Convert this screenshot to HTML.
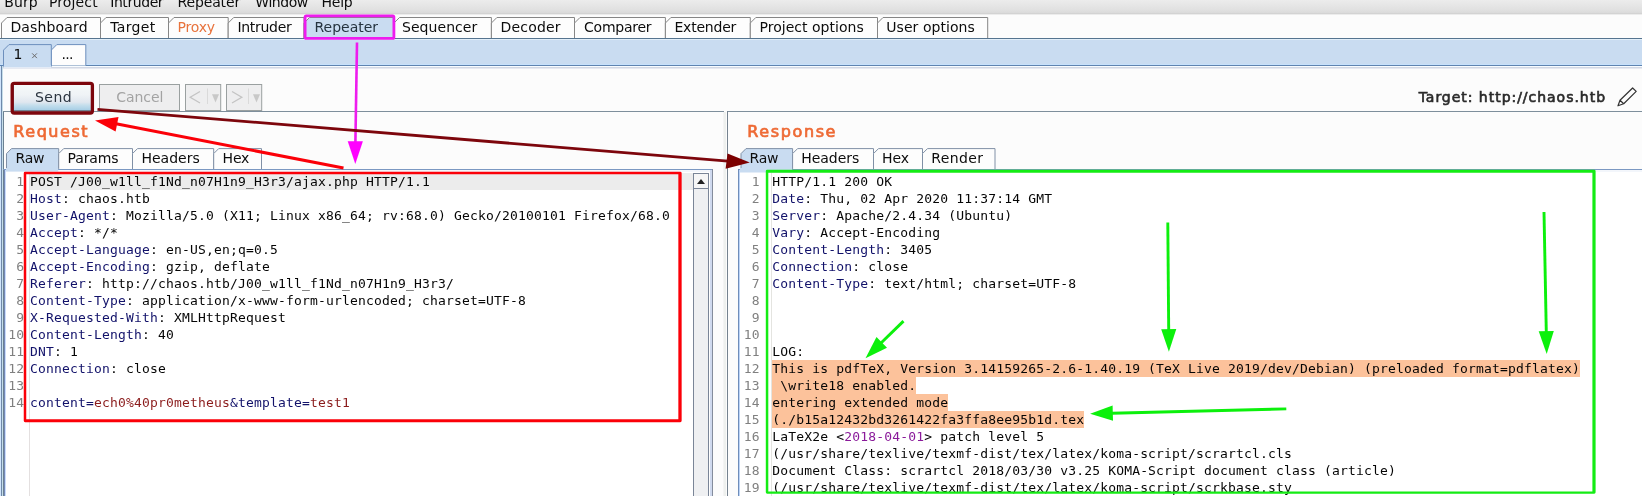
<!DOCTYPE html>
<html><head><meta charset="utf-8"><title>Burp Suite Repeater</title>
<style>
html,body{margin:0;padding:0;background:#fbfbfb;overflow:hidden}
svg{display:block;will-change:transform}
text{font-family:"DejaVu Sans","Liberation Sans",sans-serif;font-size:14px;fill:#1a1a1a;white-space:pre}
.m{font-family:"DejaVu Sans Mono","Liberation Mono",monospace;font-size:13px;letter-spacing:0.172px;fill:#050505}
.ln{font-family:"DejaVu Sans Mono","Liberation Mono",monospace;font-size:13px;letter-spacing:0.172px;fill:#808080;text-anchor:end}
.k{fill:#12126a}
.r{fill:#8b1c1c}
.p{fill:#8a1a9a}
</style></head><body>
<svg width="1642" height="496" viewBox="0 0 1642 496">
<defs>
<linearGradient id="gm" x1="0" y1="0" x2="0" y2="1"><stop offset="0" stop-color="#ececec"/><stop offset="0.8" stop-color="#e0e0e0"/><stop offset="1" stop-color="#dadada"/></linearGradient>
<linearGradient id="gs" x1="0" y1="0" x2="0" y2="1"><stop offset="0" stop-color="#f6fafa"/><stop offset="0.4" stop-color="#eff3f6"/><stop offset="0.68" stop-color="#e0e7ef"/><stop offset="0.8" stop-color="#c4deec"/><stop offset="1" stop-color="#a5cde5"/></linearGradient>
</defs>

<rect x="0" y="0" width="1642" height="496" fill="#fcfcfc"/>
<rect x="0" y="0" width="1642" height="13" fill="url(#gm)"/>
<rect x="0" y="13" width="1642" height="1" fill="#d3d3d3"/>
<rect x="0" y="14" width="1642" height="1" fill="#ececec"/>
<rect x="0" y="38" width="1642" height="27" fill="#c9dcf1"/>
<rect x="0" y="38" width="1642" height="1" fill="#55748f"/>
<rect x="0" y="39" width="1642" height="1" fill="#e2effa"/>
<rect x="0" y="64" width="1642" height="1" fill="#c6e1fc"/>
<rect x="0" y="65" width="1642" height="1" fill="#5f84b0"/>
<rect x="0" y="66" width="1642" height="1" fill="#f8fcff"/>
<rect x="0" y="67" width="1642" height="1" fill="#d2d8e4"/>
<rect x="0" y="68" width="1642" height="1" fill="#e6e9f1"/>
<path d="M1.5 38 L1.5 23.0 L7.0 17.5 L100.5 17.5 L100.5 38" fill="#fdfdfd" stroke="#868686" stroke-width="1"/>
<path d="M100.5 38 L100.5 23.0 L106.0 17.5 L168.5 17.5 L168.5 38" fill="#fdfdfd" stroke="#868686" stroke-width="1"/>
<path d="M168.5 38 L168.5 23.0 L174.0 17.5 L228.2 17.5 L228.2 38" fill="#fdfdfd" stroke="#868686" stroke-width="1"/>
<path d="M228.2 38 L228.2 23.0 L233.7 17.5 L304 17.5 L304 38" fill="#fdfdfd" stroke="#868686" stroke-width="1"/>
<path d="M304 38 L304 23.0 L309.5 17.5 L394 17.5 L394 38" fill="#c9dcf1" stroke="#868686" stroke-width="1"/>
<path d="M394 38 L394 23.0 L399.5 17.5 L491.4 17.5 L491.4 38" fill="#fdfdfd" stroke="#868686" stroke-width="1"/>
<path d="M491.4 38 L491.4 23.0 L496.9 17.5 L574.5 17.5 L574.5 38" fill="#fdfdfd" stroke="#868686" stroke-width="1"/>
<path d="M574.5 38 L574.5 23.0 L580.0 17.5 L665.4 17.5 L665.4 38" fill="#fdfdfd" stroke="#868686" stroke-width="1"/>
<path d="M665.4 38 L665.4 23.0 L670.9 17.5 L750.3 17.5 L750.3 38" fill="#fdfdfd" stroke="#868686" stroke-width="1"/>
<path d="M750.3 38 L750.3 23.0 L755.8 17.5 L877.5 17.5 L877.5 38" fill="#fdfdfd" stroke="#868686" stroke-width="1"/>
<path d="M877.5 38 L877.5 23.0 L883.0 17.5 L987.7 17.5 L987.7 38" fill="#fdfdfd" stroke="#868686" stroke-width="1"/>
<path d="M51.3 65.5 L51.3 50.1 L56.8 44.6 L85.8 44.6 L85.8 65.5" fill="#fdfdfd" stroke="#6d8fbd" stroke-width="1"/>
<path d="M3.5 66.6 L3.5 50.1 L9.0 44.6 L51.3 44.6 L51.3 66.6" fill="#c9dcf1" stroke="#6d8fbd" stroke-width="1"/>
<rect x="4" y="65" width="47" height="2" fill="#c9dcf1"/>
<rect x="4" y="67" width="47" height="1" fill="#e3ebf6"/>
<path d="M32.2 53.4 L36.9 58.1 M36.9 53.4 L32.2 58.1" stroke="#6a6a6a" stroke-width="1" fill="none"/>
<rect x="0" y="66" width="1" height="430" fill="#d0e4fb"/>
<rect x="1" y="66" width="1" height="430" fill="#6f89aa"/>
<rect x="2" y="66" width="1" height="430" fill="#c6deea"/>
<rect x="3" y="111" width="1" height="385" fill="#6b8091"/>
<rect x="4" y="169" width="1" height="327" fill="#7589b7"/>
<rect x="5" y="169" width="1" height="327" fill="#c9dcfb"/>
<rect x="13.5" y="84.5" width="78" height="26" fill="url(#gs)" stroke="#6f8291"/>
<rect x="99.5" y="84.5" width="80" height="26" fill="#eeeeef" stroke="#9aa0a0"/>
<rect x="185.5" y="84.5" width="35.2" height="26" fill="#eeeeef" stroke="#9aa0a0"/>
<rect x="207.0" y="88.5" width="1" height="15.5" fill="#dadada"/>
<path d="M212.0 94.3 l7 0 l-3.5 8.3 z" fill="#c8c8c8"/>
<rect x="226.5" y="84.5" width="35.2" height="26" fill="#eeeeef" stroke="#9aa0a0"/>
<rect x="248.0" y="88.5" width="1" height="15.5" fill="#dadada"/>
<path d="M253.0 94.3 l7 0 l-3.5 8.3 z" fill="#c8c8c8"/>
<path d="M200 91.5 L190.2 97.2 L200 103" fill="none" stroke="#c4c4c4" stroke-width="1.3"/>
<path d="M232 91.5 L241.8 97.2 L232 103" fill="none" stroke="#c4c4c4" stroke-width="1.3"/>
<path d="M1618 105.8 L1620 100.2 L1632.6 88 L1636.2 91.4 L1623.7 103.8 Z M1620 100.2 L1623.7 103.8" fill="none" stroke="#333" stroke-width="1.2" stroke-linejoin="round"/>
<rect x="3" y="111" width="721" height="1" fill="#7e8f9c"/>
<rect x="727" y="111" width="915" height="1" fill="#7e8f9c"/>
<rect x="723" y="112" width="1" height="384" fill="#f4f4f4"/>
<rect x="724" y="112" width="2" height="384" fill="#eef0ee"/>
<rect x="727" y="111" width="1" height="385" fill="#75828f"/>
<path d="M6.5 169.5 L6.5 153.6 L11.5 148.6 L58.7 148.6 L58.7 169.5" fill="#c9dcf1" stroke="#8090a6" stroke-width="1"/>
<path d="M58.7 169.5 L58.7 153.6 L63.7 148.6 L132.5 148.6 L132.5 169.5" fill="#fdfdfd" stroke="#8090a6" stroke-width="1"/>
<path d="M132.5 169.5 L132.5 153.6 L137.5 148.6 L213.7 148.6 L213.7 169.5" fill="#fdfdfd" stroke="#8090a6" stroke-width="1"/>
<path d="M213.7 169.5 L213.7 153.6 L218.7 148.6 L261.5 148.6 L261.5 169.5" fill="#fdfdfd" stroke="#8090a6" stroke-width="1"/>
<path d="M741 169.5 L741 153.6 L746 148.6 L792.6 148.6 L792.6 169.5" fill="#c9dcf1" stroke="#8090a6" stroke-width="1"/>
<path d="M792.6 169.5 L792.6 153.6 L797.6 148.6 L873.5 148.6 L873.5 169.5" fill="#fdfdfd" stroke="#8090a6" stroke-width="1"/>
<path d="M873.5 169.5 L873.5 153.6 L878.5 148.6 L922.5 148.6 L922.5 169.5" fill="#fdfdfd" stroke="#8090a6" stroke-width="1"/>
<path d="M922.5 169.5 L922.5 153.6 L927.5 148.6 L995 148.6 L995 169.5" fill="#fdfdfd" stroke="#8090a6" stroke-width="1"/>
<rect x="6" y="170" width="706" height="496" fill="#ffffff"/>
<rect x="3" y="169" width="710" height="1" fill="#7b98c2"/>
<rect x="6" y="170" width="706" height="2" fill="#f3f6fb"/>
<rect x="710" y="170" width="2" height="496" fill="#cfd9ee"/>
<rect x="712" y="169" width="1" height="496" fill="#848c9c"/>
<rect x="740" y="170" width="1642" height="496" fill="#ffffff"/>
<rect x="738" y="169" width="1642" height="1" fill="#7b98c2"/>
<rect x="738" y="170" width="1642" height="2" fill="#f3f6fb"/>
<rect x="738" y="169" width="1" height="496" fill="#6f8dba"/>
<rect x="739" y="170" width="1" height="496" fill="#bcd4f7"/>
<rect x="6" y="168" width="52.2" height="3.5" fill="#c9dcf1"/>
<rect x="740" y="168" width="52.1" height="4.5" fill="#c9dcf1"/>
<rect x="29" y="173" width="664" height="17" fill="#ececec"/>
<rect x="29" y="172" width="1" height="496" fill="#e4e0e0"/>
<rect x="771" y="172" width="1" height="496" fill="#e4e4e0"/>
<rect x="693.5" y="173.5" width="15" height="496" fill="#eff0f2" stroke="#7a8597"/>
<rect x="693.5" y="173.5" width="15" height="15" fill="#f6f6f6" stroke="#7a8597"/>
<path d="M697 184 l8 0 l-4 -5 z" fill="#222"/>
<rect x="772" y="360" width="808" height="17" fill="#fcc29b"/>
<rect x="772" y="377" width="144" height="17" fill="#fcc29b"/>
<rect x="772" y="394" width="176" height="17" fill="#fcc29b"/>
<rect x="772" y="411" width="312" height="17" fill="#fcc29b"/>
<text class="ln" x="24.2" y="186.0">1</text>
<text class="m" x="30.0" y="186.0" xml:space="preserve">POST /J00_w1ll_f1Nd_n07H1n9_H3r3/ajax.php HTTP/1.1</text>
<text class="ln" x="24.2" y="203.0">2</text>
<text class="m" x="30.0" y="203.0" xml:space="preserve"><tspan class="k">Host</tspan>: chaos.htb</text>
<text class="ln" x="24.2" y="220.0">3</text>
<text class="m" x="30.0" y="220.0" xml:space="preserve"><tspan class="k">User-Agent</tspan>: Mozilla/5.0 (X11; Linux x86_64; rv:68.0) Gecko/20100101 Firefox/68.0</text>
<text class="ln" x="24.2" y="237.0">4</text>
<text class="m" x="30.0" y="237.0" xml:space="preserve"><tspan class="k">Accept</tspan>: */*</text>
<text class="ln" x="24.2" y="254.0">5</text>
<text class="m" x="30.0" y="254.0" xml:space="preserve"><tspan class="k">Accept-Language</tspan>: en-US,en;q=0.5</text>
<text class="ln" x="24.2" y="271.0">6</text>
<text class="m" x="30.0" y="271.0" xml:space="preserve"><tspan class="k">Accept-Encoding</tspan>: gzip, deflate</text>
<text class="ln" x="24.2" y="288.0">7</text>
<text class="m" x="30.0" y="288.0" xml:space="preserve"><tspan class="k">Referer</tspan>: http://chaos.htb/J00_w1ll_f1Nd_n07H1n9_H3r3/</text>
<text class="ln" x="24.2" y="305.0">8</text>
<text class="m" x="30.0" y="305.0" xml:space="preserve"><tspan class="k">Content-Type</tspan>: application/x-www-form-urlencoded; charset=UTF-8</text>
<text class="ln" x="24.2" y="322.0">9</text>
<text class="m" x="30.0" y="322.0" xml:space="preserve"><tspan class="k">X-Requested-With</tspan>: XMLHttpRequest</text>
<text class="ln" x="24.2" y="339.0">10</text>
<text class="m" x="30.0" y="339.0" xml:space="preserve"><tspan class="k">Content-Length</tspan>: 40</text>
<text class="ln" x="24.2" y="356.0">11</text>
<text class="m" x="30.0" y="356.0" xml:space="preserve"><tspan class="k">DNT</tspan>: 1</text>
<text class="ln" x="24.2" y="373.0">12</text>
<text class="m" x="30.0" y="373.0" xml:space="preserve"><tspan class="k">Connection</tspan>: close</text>
<text class="ln" x="24.2" y="390.0">13</text>
<text class="ln" x="24.2" y="407.0">14</text>
<text class="m" x="30.0" y="407.0" xml:space="preserve"><tspan class="k">content=</tspan><tspan class="r">ech0%40pr0metheus</tspan><tspan class="k">&amp;template=</tspan><tspan class="r">test1</tspan></text>
<text class="ln" x="759.8" y="186.0">1</text>
<text class="m" x="772.2" y="186.0" xml:space="preserve">HTTP/1.1 200 OK</text>
<text class="ln" x="759.8" y="203.0">2</text>
<text class="m" x="772.2" y="203.0" xml:space="preserve"><tspan class="k">Date</tspan>: Thu, 02 Apr 2020 11:37:14 GMT</text>
<text class="ln" x="759.8" y="220.0">3</text>
<text class="m" x="772.2" y="220.0" xml:space="preserve"><tspan class="k">Server</tspan>: Apache/2.4.34 (Ubuntu)</text>
<text class="ln" x="759.8" y="237.0">4</text>
<text class="m" x="772.2" y="237.0" xml:space="preserve"><tspan class="k">Vary</tspan>: Accept-Encoding</text>
<text class="ln" x="759.8" y="254.0">5</text>
<text class="m" x="772.2" y="254.0" xml:space="preserve"><tspan class="k">Content-Length</tspan>: 3405</text>
<text class="ln" x="759.8" y="271.0">6</text>
<text class="m" x="772.2" y="271.0" xml:space="preserve"><tspan class="k">Connection</tspan>: close</text>
<text class="ln" x="759.8" y="288.0">7</text>
<text class="m" x="772.2" y="288.0" xml:space="preserve"><tspan class="k">Content-Type</tspan>: text/html; charset=UTF-8</text>
<text class="ln" x="759.8" y="305.0">8</text>
<text class="ln" x="759.8" y="322.0">9</text>
<text class="ln" x="759.8" y="339.0">10</text>
<text class="ln" x="759.8" y="356.0">11</text>
<text class="m" x="772.2" y="356.0" xml:space="preserve">LOG:</text>
<text class="ln" x="759.8" y="373.0">12</text>
<text class="m" x="772.2" y="373.0" xml:space="preserve">This is pdfTeX, Version 3.14159265-2.6-1.40.19 (TeX Live 2019/dev/Debian) (preloaded format=pdflatex)</text>
<text class="ln" x="759.8" y="390.0">13</text>
<text class="m" x="772.2" y="390.0" xml:space="preserve"> \write18 enabled.</text>
<text class="ln" x="759.8" y="407.0">14</text>
<text class="m" x="772.2" y="407.0" xml:space="preserve">entering extended mode</text>
<text class="ln" x="759.8" y="424.0">15</text>
<text class="m" x="772.2" y="424.0" xml:space="preserve">(./b15a12432bd3261422fa3ffa8ee95b1d.tex</text>
<text class="ln" x="759.8" y="441.0">16</text>
<text class="m" x="772.2" y="441.0" xml:space="preserve">LaTeX2e &lt;<tspan class="p">2018-04-01</tspan>&gt; patch level 5</text>
<text class="ln" x="759.8" y="458.0">17</text>
<text class="m" x="772.2" y="458.0" xml:space="preserve">(/usr/share/texlive/texmf-dist/tex/latex/koma-script/scrartcl.cls</text>
<text class="ln" x="759.8" y="475.0">18</text>
<text class="m" x="772.2" y="475.0" xml:space="preserve">Document Class: scrartcl 2018/03/30 v3.25 KOMA-Script document class (article)</text>
<text class="ln" x="759.8" y="492.0">19</text>
<text class="m" x="772.2" y="492.0" xml:space="preserve">(/usr/share/texlive/texmf-dist/tex/latex/koma-script/scrkbase.sty</text>
<text x="4.31" y="7" style="letter-spacing:0.059px;fill:#0c0c0c;">Burp</text>
<text x="48.91" y="7" style="letter-spacing:0.142px;fill:#0c0c0c;">Project</text>
<text x="110.21" y="7" style="letter-spacing:-0.423px;fill:#0c0c0c;">Intruder</text>
<text x="177.41" y="7" style="letter-spacing:-0.121px;fill:#0c0c0c;">Repeater</text>
<text x="255.30" y="7" style="letter-spacing:-0.454px;fill:#0c0c0c;">Window</text>
<text x="321.51" y="7" style="letter-spacing:-0.237px;fill:#0c0c0c;">Help</text>
<text x="10.41" y="32" style="letter-spacing:0.149px;fill:#0c0c0c;">Dashboard</text>
<text x="110.30" y="32" style="letter-spacing:0.302px;fill:#0c0c0c;">Target</text>
<text x="177.41" y="32" style="letter-spacing:-0.156px;fill:#e8733d;">Proxy</text>
<text x="237.41" y="32" style="letter-spacing:-0.294px;fill:#0c0c0c;">Intruder</text>
<text x="314.51" y="32" style="letter-spacing:-0.006px;fill:#25333f;">Repeater</text>
<text x="402.03" y="32" style="letter-spacing:0.054px;fill:#0c0c0c;">Sequencer</text>
<text x="500.41" y="32" style="letter-spacing:0.216px;fill:#0c0c0c;">Decoder</text>
<text x="584.05" y="32" style="letter-spacing:-0.243px;fill:#0c0c0c;">Comparer</text>
<text x="674.51" y="32" style="letter-spacing:-0.223px;fill:#0c0c0c;">Extender</text>
<text x="759.51" y="32" style="letter-spacing:0.021px;fill:#0c0c0c;">Project options</text>
<text x="886.31" y="32" style="letter-spacing:0.044px;fill:#0c0c0c;">User options</text>
<text x="13.53" y="59" style="letter-spacing:0.000px;fill:#0c0c0c;">1</text>
<text x="61.49" y="59" style="letter-spacing:-0.654px;fill:#0c0c0c;">...</text>
<text x="34.88" y="102" style="letter-spacing:0.525px;fill:#2b3540;">Send</text>
<text x="116.20" y="102" style="letter-spacing:-0.050px;fill:#a3a3a3;">Cancel</text>
<text x="1418.64" y="102" style="letter-spacing:0.971px;fill:#2a2a2a;stroke:#2a2a2a;stroke-width:0.62px">Target: http://chaos.htb</text>
<text x="13.34" y="137" style="letter-spacing:1.546px;fill:#ee6a35;font-size:16px;stroke:#ee6a35;stroke-width:0.7px">Request</text>
<text x="747.34" y="137" style="letter-spacing:1.610px;fill:#ee6a35;font-size:16px;stroke:#ee6a35;stroke-width:0.7px">Response</text>
<text x="15.61" y="163" style="letter-spacing:-0.315px;fill:#0c0c0c;">Raw</text>
<text x="67.41" y="163" style="letter-spacing:-0.080px;fill:#0c0c0c;">Params</text>
<text x="141.41" y="163" style="letter-spacing:0.023px;fill:#0c0c0c;">Headers</text>
<text x="222.51" y="163" style="letter-spacing:-0.135px;fill:#0c0c0c;">Hex</text>
<text x="749.51" y="163" style="letter-spacing:-0.215px;fill:#0c0c0c;">Raw</text>
<text x="801.16" y="163" style="letter-spacing:-0.002px;fill:#0c0c0c;">Headers</text>
<text x="882.01" y="163" style="letter-spacing:-0.010px;fill:#0c0c0c;">Hex</text>
<text x="931.16" y="163" style="letter-spacing:0.381px;fill:#0c0c0c;">Render</text>
<rect x="305.1" y="15.8" width="88.8" height="22.6" rx="1.2" fill="none" stroke="#ee1cee" stroke-width="2.8"/>
<path d="M357 42.5 L355.4 143" stroke="#ee1cee" stroke-width="2.6" fill="none"/>
<path d="M347.7 141.2 L362.9 141.2 L355.3 164 z" fill="#ff00ff"/>
<rect x="12.2" y="83.3" width="80.2" height="29.7" rx="2" fill="none" stroke="#7d060c" stroke-width="3.3"/>
<path d="M97.5 109.3 L728 161.2" stroke="#7d060c" stroke-width="2.8" fill="none"/>
<path d="M727.5 153.5 L749.8 162.5 L725.6 168.8 z" fill="#7c0000"/>
<path d="M25.15 171.75 H680.25 Q681.65 171.75 681.65 173.15 V420.85 Q681.65 422.25 680.25 422.25 H25.15 Q23.75 422.25 23.75 420.85 V173.15 Q23.75 171.75 25.15 171.75 Z M26.25 174.15 V419.35 H678.35 V174.15 Z" fill="#fb0008" fill-rule="evenodd"/>
<path d="M343.5 168 L116 123.8" stroke="#fb0008" stroke-width="3" fill="none"/>
<path d="M95 120.5 L118.5 117 L115.6 131.5 z" fill="#fb0008"/>
<path d="M767.20 169.75 H1594.20 Q1595.60 169.75 1595.60 171.15 V492.35 Q1595.60 493.75 1594.20 493.75 H767.20 Q765.80 493.75 765.80 492.35 V171.15 Q765.80 169.75 767.20 169.75 Z M768.30 172.65 V491.45 H1592.40 V172.65 Z" fill="#14ec14" fill-rule="evenodd"/>
<path d="M1167.8 222.6 L1168.7 330.1" stroke="#0cf00c" stroke-width="2.9" fill="none"/>
<path d="M1168.9 351.8 L1161.2 329.2 L1176.3 329.0 z" fill="#0cf00c"/>
<path d="M1544.0 212.0 L1546.3 332.2" stroke="#0cf00c" stroke-width="2.9" fill="none"/>
<path d="M1546.7 353.9 L1538.7 331.3 L1553.8 331.1 z" fill="#0cf00c"/>
<path d="M903.5 321.1 L881.0 343.0" stroke="#0cf00c" stroke-width="2.9" fill="none"/>
<path d="M865.5 358.2 L876.5 336.9 L887.0 347.7 z" fill="#0cf00c"/>
<path d="M1286.3 408.9 L1111.8 413.2" stroke="#0cf00c" stroke-width="2.9" fill="none"/>
<path d="M1090.1 413.7 L1112.6 405.6 L1113.0 420.7 z" fill="#0cf00c"/>
</svg></body></html>
